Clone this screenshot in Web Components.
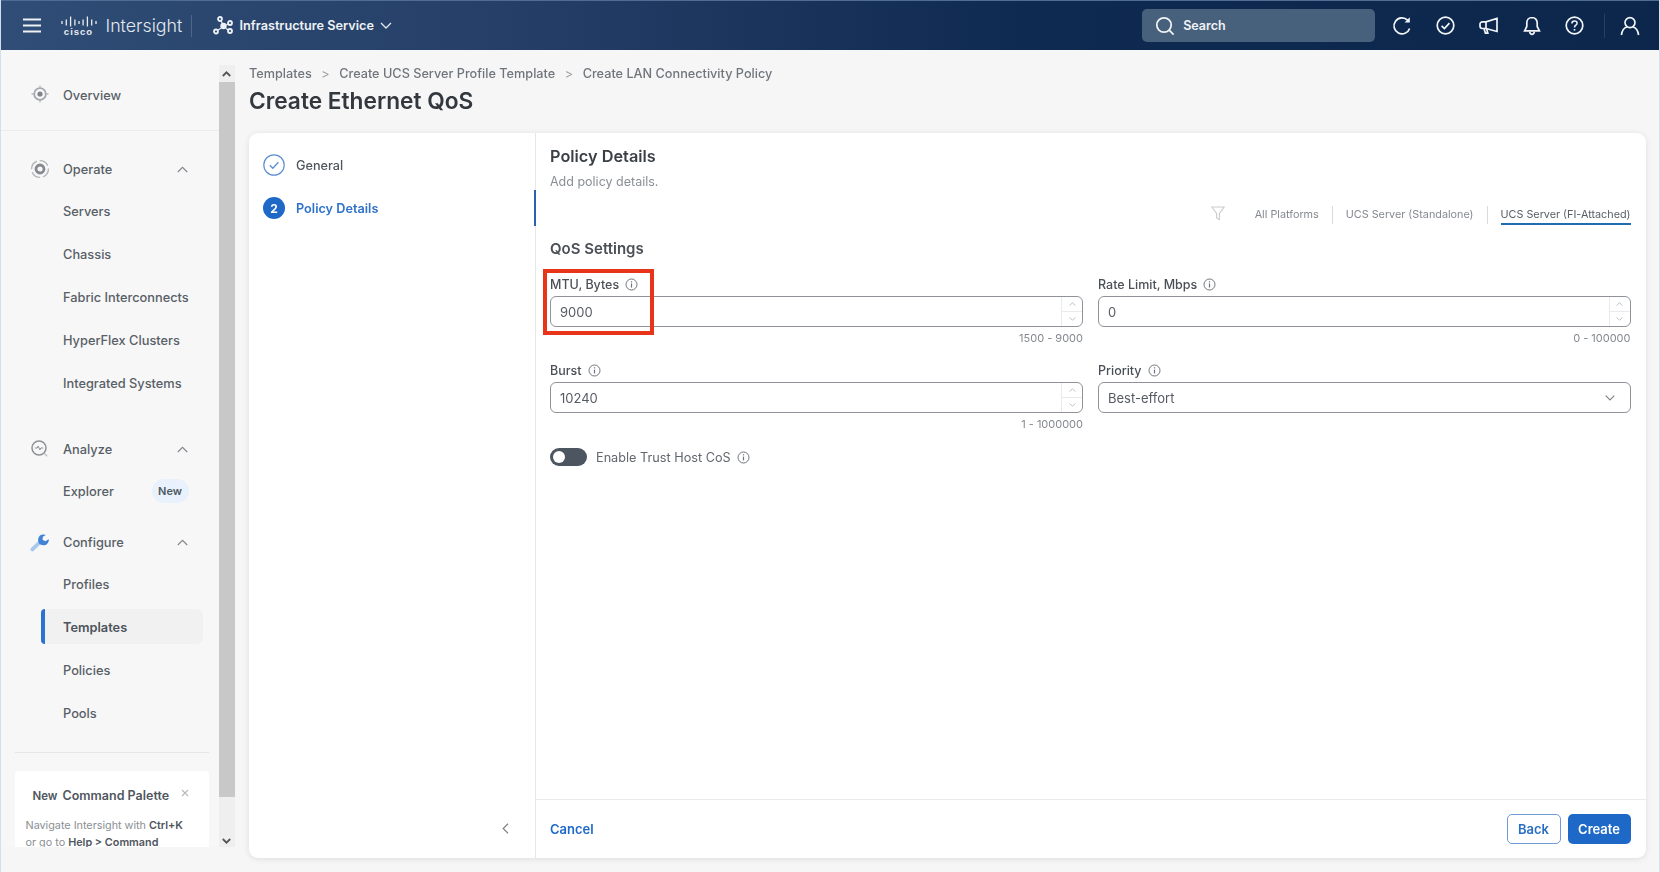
<!DOCTYPE html>
<html lang="en">
<head>
<meta charset="utf-8">
<title>Create Ethernet QoS</title>
<style>
  html, body { margin: 0; height: 100%; }
  body { font-family: Inter, "Liberation Sans", sans-serif; background: #f6f6f6; color: #50565e; overflow: hidden; }
</style>
</head>
<body>
<is-app>
  <is-header slot="header"></is-header>
  <is-sidebar slot="sidebar">
    <nav-item icon="overview" top>Overview</nav-item>
    <nav-group label="Operate" icon="operate" style="margin-top:17px">
      <nav-item>Servers</nav-item>
      <nav-item>Chassis</nav-item>
      <nav-item>Fabric Interconnects</nav-item>
      <nav-item>HyperFlex Clusters</nav-item>
      <nav-item>Integrated Systems</nav-item>
    </nav-group>
    <nav-group label="Analyze" icon="analyze" style="margin-top:24px">
      <nav-item badge="New">Explorer</nav-item>
    </nav-group>
    <nav-group label="Configure" icon="configure" style="margin-top:9px">
      <nav-item>Profiles</nav-item>
      <nav-item active>Templates</nav-item>
      <nav-item>Policies</nav-item>
      <nav-item>Pools</nav-item>
    </nav-group>
    <command-card></command-card>
  </is-sidebar>
  <side-scrollbar slot="scrollbar"></side-scrollbar>
  <bread-crumbs slot="crumbs">
    <span>Templates</span><span>Create UCS Server Profile Template</span><span>Create LAN Connectivity Policy</span>
  </bread-crumbs>
  <page-title slot="crumbs">Create Ethernet QoS</page-title>
  <wizard-card slot="card">
    <wizard-steps slot="steps"></wizard-steps>
    <policy-form slot="body"></policy-form>
  </wizard-card>
</is-app>

<script>
const ICONS = {
  overview: `<svg width="20" height="20" viewBox="0 0 20 20" fill="none" stroke="#8d9297"><circle cx="10" cy="10" r="5.8" stroke-width="1.8" stroke="#a4a8ac"/><circle cx="10" cy="10" r="2.6" fill="#7f8489" stroke="none"/><path d="M10 1.5v2.4M10 16.1v2.4M1.5 10h2.4M16.1 10h2.4" stroke-width="1.3" stroke="#b4b7ba"/></svg>`,
  operate: `<svg width="20" height="20" viewBox="0 0 20 20" fill="none" stroke="#9a9ea2"><circle cx="10" cy="10" r="8.4" stroke-width="1.4" stroke-dasharray="10 3" stroke="#b4b7ba"/><circle cx="10" cy="10" r="4" stroke-width="2.8" stroke="#85898e"/></svg>`,
  analyze: `<svg width="20" height="20" viewBox="0 0 20 20" fill="none" stroke="#8d9297"><circle cx="9" cy="9" r="7" stroke-width="1.5"/><path d="M4.8 9h2.4l1-2 1.6 4 1-2h2.4" stroke-width="1"/><path d="m14.6 14.6 2.6 2.6" stroke="#c3c6c9" stroke-width="1.5"/></svg>`,
  configure: `<svg width="20" height="20" viewBox="0 0 20 20" fill="none"><path d="M2.4 17.4 8.4 11.6" stroke="#a9c8ee" stroke-width="3.8" stroke-linecap="round"/><path d="M13.6 2.4a5.4 5.4 0 1 0 5 7.2c.2-.8.3-1.5.2-2.3l-3.6 2-2.6-1.6.2-3 3-1.8a5 5 0 0 0-2.2-.5Z" fill="#3f82d8"/></svg>`
};

const INFO = `<svg width="13" height="13" viewBox="0 0 13 13" fill="none" stroke="#6f747a" style="display:block"><circle cx="6.5" cy="6.5" r="5.5"/><path d="M6.5 5.6v3.8" stroke-width="1.2"/><path d="M6.5 3.2v1.2" stroke-width="1.2"/></svg>`;

class IsApp extends HTMLElement {
  connectedCallback() {
    this.attachShadow({ mode: 'open' }).innerHTML = `
      <style>
        :host { display: grid; grid-template-rows: 50px 1fr; height: 872px; width: 1660px; box-sizing: border-box;
                border-left: 1.5px solid #cfe0ee; border-right: 1.5px solid #cfe0ee; filter: blur(.35px); }
        .head { grid-column: 1 / -1; }
        .main { display: grid; grid-template-columns: 217.5px 16px 1fr; min-height: 0; }
        .side { height: 797px; overflow: hidden; }
        .bar { height: 782px; margin-top: 15px; }
        .content { padding: 12px 13.5px 14px 14.5px; display: flex; flex-direction: column; min-height: 0; }
        .card { flex: 1; display: flex; min-height: 0; margin-top: 14px; }
      </style>
      <div class="head"><slot name="header"></slot></div>
      <div class="main">
        <div class="side"><slot name="sidebar"></slot></div>
        <div class="bar"><slot name="scrollbar"></slot></div>
        <div class="content">
          <slot name="crumbs"></slot>
          <div class="card"><slot name="card"></slot></div>
        </div>
      </div>`;
  }
}

class IsHeader extends HTMLElement {
  connectedCallback() {
    const stroke = 'fill="none" stroke="#f2f5f8" stroke-width="1.7"';
    this.attachShadow({ mode: 'open' }).innerHTML = `
      <style>
        :host { display: flex; align-items: center; height: 50px; box-sizing: border-box; color: #fff;
                background: linear-gradient(90deg, #2f4d76 0%, #253f68 30%, #0f2a50 62%, #0c264c 100%);
                border-top: 1px solid #4f6c92; }
        svg { display: block; flex: none; }
        .burger { margin-left: 21.5px; }
        .logo { margin-left: 19px; display: flex; flex-direction: column; align-items: center; width: 36px; }
        .logo b { font: 700 9.5px/9px "Liberation Sans", sans-serif; letter-spacing: 1px; color: #e8edf2; margin-top: 0; }
        .brand { margin-left: 9px; font-size: 17.8px; font-weight: 300; color: #e3e8ee; width: 76px; white-space: nowrap; }
        .sep { width: 1px; height: 22px; background: #4c6789; margin-left: 9px; }
        .svc { margin-left: 21px; }
        .name { margin-left: 7px; font-size: 12.7px; font-weight: 600; white-space: nowrap; color: #eef1f5; }
        .chev { margin-left: 6px; }
        .search { margin-left: auto; width: 233px; height: 33px; border-radius: 5px; background: #47607c; display: flex;
                  align-items: center; box-sizing: border-box; padding-left: 13px; gap: 8px; font-size: 12.5px; font-weight: 600; color: #f0f3f6; }
        .icons { display: flex; align-items: center; margin-left: 5.4px; margin-right: 19.5px; }
        .icons .b { width: 43.2px; display: flex; justify-content: center; }
        .v { width: 1px; height: 24px; background: #24406a; margin: 0 15px 0 7px; }
      </style>
      <svg class="burger" width="19" height="15" viewBox="0 0 19 15" fill="none" stroke="#eef2f6" stroke-width="2"><path d="M0 1.5h18M0 7.5h18M0 13.5h18"/></svg>
      <div class="logo">
        <svg width="36" height="11" viewBox="0 0 36 11" fill="none" stroke="#e8edf2" stroke-width="1.3"><path d="M1 5v3M5.3 3.5v6M9.6 0.5v10M13.9 3.5v6M18 5v3M22.1 3.5v6M26.4 0.5v10M30.7 3.5v6M35 5v3"/></svg>
        <b>cisco</b>
      </div>
      <div class="brand">Intersight</div>
      <div class="sep"></div>
      <svg class="svc" width="20" height="19" viewBox="0 0 20 19" fill="none" stroke="#eef2f6" stroke-width="1.8"><circle cx="7" cy="3" r="2"/><circle cx="17" cy="7" r="2"/><circle cx="17" cy="15" r="2"/><circle cx="3" cy="15.5" r="2"/><circle cx="10.5" cy="10" r="3.2" fill="#eef2f6" stroke="none"/><path d="m8 5 1.4 2.4M13.4 9l1.8-1M13 12.4l2 1.4M8 12.2l-3.4 2" stroke-width="1.2"/></svg>
      <div class="name">Infrastructure Service</div>
      <svg class="chev" width="12" height="7" viewBox="0 0 12 7" fill="none" stroke="#e3e8ee" stroke-width="1.3"><path d="m1 1 5 5 5-5"/></svg>
      <div class="search">
        <svg width="20" height="20" viewBox="0 0 20 20" ${stroke}><circle cx="9" cy="9" r="7.2"/><path d="m14.2 14.2 4.4 4.4"/></svg>
        <span>Search</span>
      </div>
      <div class="icons">
        <div class="b"><svg width="20" height="20" viewBox="0 0 20 20" ${stroke}><path d="M17.6 12.4A8 8 0 1 1 15.6 4.2"/><path d="M17.8 1.2v5.2h-5.2" fill="#f2f5f8" stroke="none"/></svg></div>
        <div class="b"><svg width="19" height="19" viewBox="0 0 19 19" ${stroke}><circle cx="9.5" cy="9.5" r="8.3"/><path d="m5.6 9.8 2.8 2.8 5-5.4"/></svg></div>
        <div class="b"><svg width="20" height="18" viewBox="0 0 20 18" ${stroke}><path d="M18 1.5v13L7 11.5H3.4a2.4 2.4 0 0 1-2.4-2.4V7.2a2.4 2.4 0 0 1 2.4-2.4H7Z"/><path d="M7 4.8v6.7M5 11.6l1.4 4.6h2.4l-1.2-4.4"/></svg></div>
        <div class="b"><svg width="18" height="20" viewBox="0 0 18 20" ${stroke}><path d="M9 1.5c-3.2 0-5.2 2.4-5.2 5.4v3.6L1.6 14.8h14.8l-2.2-4.3V6.9c0-3-2-5.4-5.2-5.4Z"/><path d="M6.6 15.6c.3 1.7 1.2 2.7 2.4 2.7s2.1-1 2.4-2.7"/></svg></div>
        <div class="b"><svg width="19" height="19" viewBox="0 0 19 19" ${stroke}><circle cx="9.5" cy="9.5" r="8.3"/><path d="M6.9 7.4c0-1.5 1.1-2.4 2.6-2.4s2.6.9 2.6 2.2c0 2-2.6 2-2.6 4.2" stroke-width="1.5"/><path d="M9.5 13v1.6" stroke-width="1.6"/></svg></div>
        <div class="v"></div>
        <svg width="20" height="20" viewBox="0 0 20 20" ${stroke}><circle cx="10" cy="6.6" r="5"/><path d="M1.4 19c.6-4 3-7.4 5.6-8M18.6 19c-.6-4-3-7.4-5.6-8"/></svg>
      </div>`;
  }
}

class IsSidebar extends HTMLElement {
  connectedCallback() {
    this.attachShadow({ mode: 'open' }).innerHTML = `
      <style>
        :host { display: block; box-sizing: border-box; padding-top: 22px; height: 797px; overflow: hidden; background: #f7f7f7; }
      </style>
      <slot></slot>`;
  }
}

class NavItem extends HTMLElement {
  connectedCallback() {
    const icon = this.getAttribute('icon');
    const badge = this.getAttribute('badge');
    this.attachShadow({ mode: 'open' }).innerHTML = `
      <style>
        :host { display: block; }
        :host([top]) .row { height: 44px; }
        :host([top]) { padding-bottom: 14px; border-bottom: 1px solid #ebebeb; }
        .row { display: flex; align-items: center; height: 43px; box-sizing: border-box; padding: 2px 0 0 62px; position: relative;
               font-size: 12.8px; font-weight: 500; color: #595f67; white-space: nowrap; }
        .ic { position: absolute; left: 29px; top: 50%; transform: translateY(-50%); }
        .ic svg { display: block; }
        .badge { margin-left: auto; margin-right: 30px; margin-top: -1px; width: 37px; height: 24px; border-radius: 12px; background: #e8f1fc;
                 font-size: 11px; font-weight: 600; display: flex; align-items: center; justify-content: center; color: #4f5962; }
        :host([active]) .row { background: #f1f1f2; margin: 4px 16px 4px 39.5px; height: 35px;
                               border-left: 4px solid #2c72cf; padding-left: 18.5px; border-radius: 4px 6px 6px 4px; color: #4d535b; font-weight: 600; }
      </style>
      <div class="row">
        ${icon ? `<span class="ic">${ICONS[icon]}</span>` : ''}
        <slot></slot>
        ${badge ? `<span class="badge">${badge}</span>` : ''}
      </div>`;
  }
}

class NavGroup extends HTMLElement {
  connectedCallback() {
    this.attachShadow({ mode: 'open' }).innerHTML = `
      <style>
        :host { display: block; }
        .head { display: flex; align-items: center; height: 41px; box-sizing: border-box; padding: 2px 31px 0 62px; position: relative;
                font-size: 12.8px; font-weight: 500; color: #595f67; }
        .ic { position: absolute; left: 29px; top: 50%; transform: translateY(-50%); }
        .ic svg { display: block; }
        .chev { margin-left: auto; display: block; }
      </style>
      <div class="head">
        <span class="ic">${ICONS[this.getAttribute('icon')]}</span>
        <span>${this.getAttribute('label')}</span>
        <svg class="chev" width="11" height="7" viewBox="0 0 11 7" fill="none" stroke="#83888d" stroke-width="1.2"><path d="m.8 6 4.7-4.7L10.2 6"/></svg>
      </div>
      <slot></slot>`;
  }
}

class CommandCard extends HTMLElement {
  connectedCallback() {
    this.attachShadow({ mode: 'open' }).innerHTML = `
      <style>
        :host { display: block; margin: 17.5px 10px 0 13.5px; padding-top: 18px; border-top: 1px solid #e6e6e6; }
        .card { background: #fff; border-radius: 4px 4px 0 0; height: 77px; overflow: hidden; box-sizing: border-box; padding: 15px 10px 0 11px; position: relative; }
        .top { display: flex; align-items: center; height: 20px; font-size: 12.5px; font-weight: 600; color: #50565e; white-space: nowrap; }
        .new { width: 37px; padding-left: 7px; box-sizing: border-box; font-size: 11.5px; font-weight: 600; flex: none; margin-right: -3px; }
        .x { position: absolute; right: 20px; top: 18px; }
        p { margin: 11px 0 0; font-size: 10.8px; line-height: 17px; color: #8a8f94; white-space: nowrap; }
        p b { color: #50565e; font-weight: 600; }
      </style>
      <div class="card">
        <div class="top"><span class="new">New</span><span style="margin-left:3px">Command Palette</span></div>
        <svg class="x" width="8" height="8" viewBox="0 0 8 8" stroke="#b6b9bc" stroke-width="1.1"><path d="m1 1 6 6M7 1 1 7"/></svg>
        <p>Navigate Intersight with <b>Ctrl+K</b><br>or go to <b>Help &gt; Command</b></p>
      </div>`;
  }
}

class SideScrollbar extends HTMLElement {
  connectedCallback() {
    this.attachShadow({ mode: 'open' }).innerHTML = `
      <style>
        :host { display: flex; flex-direction: column; height: 782px; background: #efefef; }
        .btn { height: 17px; display: flex; align-items: center; justify-content: center; flex: none; }
        .thumb { background: #c8c8c8; height: 715px; flex: none; }
        .fill { flex: 1; display: flex; align-items: flex-end; justify-content: center; padding-bottom: 3px; }
      </style>
      <div class="btn"><svg width="9" height="6" viewBox="0 0 9 6" fill="none" stroke="#555" stroke-width="1.8"><path d="m.8 5 3.7-3.7L8.2 5"/></svg></div>
      <div class="thumb"></div>
      <div class="fill"><svg width="9" height="6" viewBox="0 0 9 6" fill="none" stroke="#555" stroke-width="1.8"><path d="m.8 1 3.7 3.7L8.2 1"/></svg></div>`;
  }
}

class BreadCrumbs extends HTMLElement {
  connectedCallback() {
    this.attachShadow({ mode: 'open' }).innerHTML = `
      <style>
        :host { display: block; height: 21px; }
        ::slotted(span) { font-size: 12.7px; font-weight: 500; color: #70757b; white-space: nowrap; line-height: 20px; }
        ::slotted(span:not(:last-child))::after { content: ">"; margin: 0 9.5px 0 9.5px; color: #9a9ea2; font-weight: 400; }
      </style>
      <slot></slot>`;
  }
}

class PageTitle extends HTMLElement {
  connectedCallback() {
    this.attachShadow({ mode: 'open' }).innerHTML = `
      <style>
        :host { display: block; font-size: 22.7px; font-weight: 600; line-height: 36px; color: #33383e; white-space: nowrap; }
      </style>
      <slot></slot>`;
  }
}

class WizardCard extends HTMLElement {
  connectedCallback() {
    this.attachShadow({ mode: 'open' }).innerHTML = `
      <style>
        :host { display: flex; flex: 1; background: #fff; border-radius: 9px; box-shadow: 0 1px 6px rgba(0,0,0,.10); overflow: hidden; min-width: 0; }
        .steps { width: 286px; flex: none; border-right: 1px solid #e6e7e8; display: flex; }
        .body { flex: 1; display: flex; min-width: 0; }
      </style>
      <div class="steps"><slot name="steps"></slot></div>
      <div class="body"><slot name="body"></slot></div>`;
  }
}

class WizardSteps extends HTMLElement {
  connectedCallback() {
    this.attachShadow({ mode: 'open' }).innerHTML = `
      <style>
        :host { display: flex; flex-direction: column; flex: 1; position: relative; padding: 11px 0 0 14px; box-sizing: border-box; }
        .step { display: flex; align-items: center; height: 22px; gap: 11px; font-size: 12.7px; font-weight: 500; color: #50565e; margin: 10px 0 11px; }
        .step.on { color: #2f72c9; font-weight: 600; margin-top: 10px; }
        .dot { width: 22px; height: 22px; border-radius: 50%; background: #1e69c8; color: #fff; font-size: 12px; font-weight: 700;
               display: flex; align-items: center; justify-content: center; }
        .mark { position: absolute; right: -1px; top: 57px; width: 2px; height: 36px; background: #2764b0; }
        .back { margin-top: auto; margin-bottom: 24px; margin-left: 239px; display: block; }
      </style>
      <div class="step">
        <svg width="22" height="22" viewBox="0 0 22 22" fill="none" stroke="#5d8fd3" style="display:block"><circle cx="11" cy="11" r="10.2" stroke-width="1.2"/><path d="m6.8 11.2 3 3 5.6-6" stroke-width="1.3"/></svg>
        <span>General</span>
      </div>
      <div class="step on"><span class="dot">2</span><span>Policy Details</span></div>
      <div class="mark"></div>
      <svg class="back" width="7" height="11" viewBox="0 0 7 11" fill="none" stroke="#85898e" stroke-width="1.3"><path d="M6 .8 1.2 5.5 6 10.2"/></svg>`;
  }
}

class PolicyForm extends HTMLElement {
  connectedCallback() {
    this.attachShadow({ mode: 'open' }).innerHTML = `
      <style>
        :host { display: flex; flex-direction: column; flex: 1; min-width: 0; }
        .main { flex: 1; padding: 12px 15px 0 14px; }
        h2 { margin: 0; font-size: 16.3px; line-height: 22px; font-weight: 600; color: #3a3f45; }
        .sub { margin: 5px 0 0; font-size: 12.5px; line-height: 20px; color: #8a8f94; }
        .tabs { display: flex; justify-content: flex-end; align-items: center; height: 26px; margin-top: 8px; font-size: 10.8px; color: #85898f; }
        .tabs svg { display: block; margin-right: 30px; }
        .tab { padding: 0 0 2px; line-height: 16px; margin-top: 6px; white-space: nowrap; }
        .tab.on { color: #585e65; border-bottom: 2px solid #1f6db0; padding-bottom: 0; }
        .rule { width: 1px; height: 18px; background: #d9dadb; margin: 3px 13px 0; }
        h3 { margin: 13px 0 0; font-size: 15px; line-height: 20px; font-weight: 600; color: #4b5057; }
        .grid { display: grid; grid-template-columns: 533px 1fr; column-gap: 15px; margin-top: 15px; }
        .trust { display: flex; align-items: center; height: 20px; font-size: 12.7px; color: #62676e; margin-top: 1px; }
        .switch { width: 37px; height: 18px; border-radius: 9px; background: #4d5560; position: relative; margin-right: 9px; flex: none; }
        .switch::after { content: ""; position: absolute; left: 3px; top: 3px; width: 12px; height: 12px; border-radius: 50%; background: #fff; }
        .trust svg { margin-left: 6px; }
        footer { height: 59px; flex: none; border-top: 1px solid #e9eaeb; display: flex; align-items: center; padding: 0 15px 0 14px; box-sizing: border-box; }
        .cancel { font-size: 13px; font-weight: 600; color: #1e69c8; }
        .btn { height: 30px; border-radius: 5px; font-size: 13px; font-weight: 600; display: flex; align-items: center; justify-content: center; box-sizing: border-box; }
        .back { width: 54px; margin-left: auto; border: 1.5px solid #6f9bd6; color: #2a6ec4; }
        .create { width: 63px; margin-left: 7px; background: #1e69c8; color: #fff; }
      </style>
      <div class="main">
        <h2>Policy Details</h2>
        <p class="sub">Add policy details.</p>
        <div class="tabs">
          <svg width="14" height="15" viewBox="0 0 14 15" fill="none" stroke="#c9cbcd" stroke-width="1.1"><path d="M.8 1h12.4L8.4 7.4v6.2L5.6 12V7.4Z"/></svg>
          <span class="tab">All Platforms</span><span class="rule"></span>
          <span class="tab">UCS Server (Standalone)</span><span class="rule"></span>
          <span class="tab on">UCS Server (FI-Attached)</span>
        </div>
        <h3>QoS Settings</h3>
        <div class="grid">
          <form-field label="MTU, Bytes" hint="1500 - 9000" highlight><num-input value="9000"></num-input></form-field>
          <form-field label="Rate Limit, Mbps" hint="0 - 100000"><num-input value="0"></num-input></form-field>
          <form-field label="Burst" hint="1 - 1000000"><num-input value="10240"></num-input></form-field>
          <form-field label="Priority" hint="&nbsp;"><select-input value="Best-effort"></select-input></form-field>
        </div>
        <div class="trust"><span class="switch"></span><span>Enable Trust Host CoS</span>${INFO}</div>
      </div>
      <footer>
        <span class="cancel">Cancel</span>
        <span class="btn back">Back</span>
        <span class="btn create">Create</span>
      </footer>`;
  }
}

class FormField extends HTMLElement {
  connectedCallback() {
    this.attachShadow({ mode: 'open' }).innerHTML = `
      <style>
        :host { display: block; position: relative; min-width: 0; }
        .label { display: flex; align-items: center; gap: 6px; height: 20px; margin-bottom: 2px; font-size: 12.5px; font-weight: 500; color: #4b5057; }
        .hint { height: 20px; line-height: 22px; margin-bottom: 13px; text-align: right; font-size: 11px; color: #85898f; }
        .box { display: none; position: absolute; left: -7px; top: -5px; width: 111px; height: 66px; box-sizing: border-box; border: 4px solid #e8351a; pointer-events: none; }
        :host([highlight]) .box { display: block; }
      </style>
      <div class="label"><span>${this.getAttribute('label')}</span>${INFO}</div>
      <slot></slot>
      <div class="hint">${this.getAttribute('hint')}</div>
      <div class="box"></div>`;
  }
}

class NumInput extends HTMLElement {
  connectedCallback() {
    this.attachShadow({ mode: 'open' }).innerHTML = `
      <style>
        :host { display: flex; height: 31px; box-sizing: border-box; border: 1px solid #8f9399; border-radius: 6px; font-size: 13px; color: #565b62; background: #fff; }
        .val { flex: 1; padding-left: 9px; line-height: 30px; }
        .spin { width: 20px; display: flex; flex-direction: column; border-left: 1px solid #e9eaeb; }
        .spin span { flex: 1; display: flex; align-items: center; justify-content: center; }
        .spin span + span { border-top: 1px solid #e9eaeb; }
      </style>
      <span class="val">${this.getAttribute('value')}</span>
      <div class="spin">
        <span><svg width="7" height="4" viewBox="0 0 7 4" fill="none" stroke="#bdc0c3"><path d="m.6 3.6 2.9-2.9 2.9 2.9"/></svg></span>
        <span><svg width="7" height="4" viewBox="0 0 7 4" fill="none" stroke="#bdc0c3"><path d="m.6.4 2.9 2.9L6.4.4"/></svg></span>
      </div>`;
  }
}

class SelectInput extends HTMLElement {
  connectedCallback() {
    this.attachShadow({ mode: 'open' }).innerHTML = `
      <style>
        :host { display: flex; align-items: center; height: 31px; box-sizing: border-box; border: 1px solid #8f9399; border-radius: 6px; font-size: 13px; color: #565b62; background: #fff; padding: 0 15px 0 9px; }
        svg { margin-left: auto; display: block; }
      </style>
      <span>${this.getAttribute('value')}</span>
      <svg width="10" height="6" viewBox="0 0 10 6" fill="none" stroke="#7c8086" stroke-width="1.1"><path d="m.7.7 4.3 4.3L9.3.7"/></svg>`;
  }
}

window.customElements.define('is-app', IsApp);
window.customElements.define('is-header', IsHeader);
window.customElements.define('is-sidebar', IsSidebar);
window.customElements.define('nav-item', NavItem);
window.customElements.define('nav-group', NavGroup);
window.customElements.define('command-card', CommandCard);
window.customElements.define('side-scrollbar', SideScrollbar);
window.customElements.define('bread-crumbs', BreadCrumbs);
window.customElements.define('page-title', PageTitle);
window.customElements.define('wizard-card', WizardCard);
window.customElements.define('wizard-steps', WizardSteps);
window.customElements.define('policy-form', PolicyForm);
window.customElements.define('form-field', FormField);
window.customElements.define('num-input', NumInput);
window.customElements.define('select-input', SelectInput);
</script>
</body>
</html>
